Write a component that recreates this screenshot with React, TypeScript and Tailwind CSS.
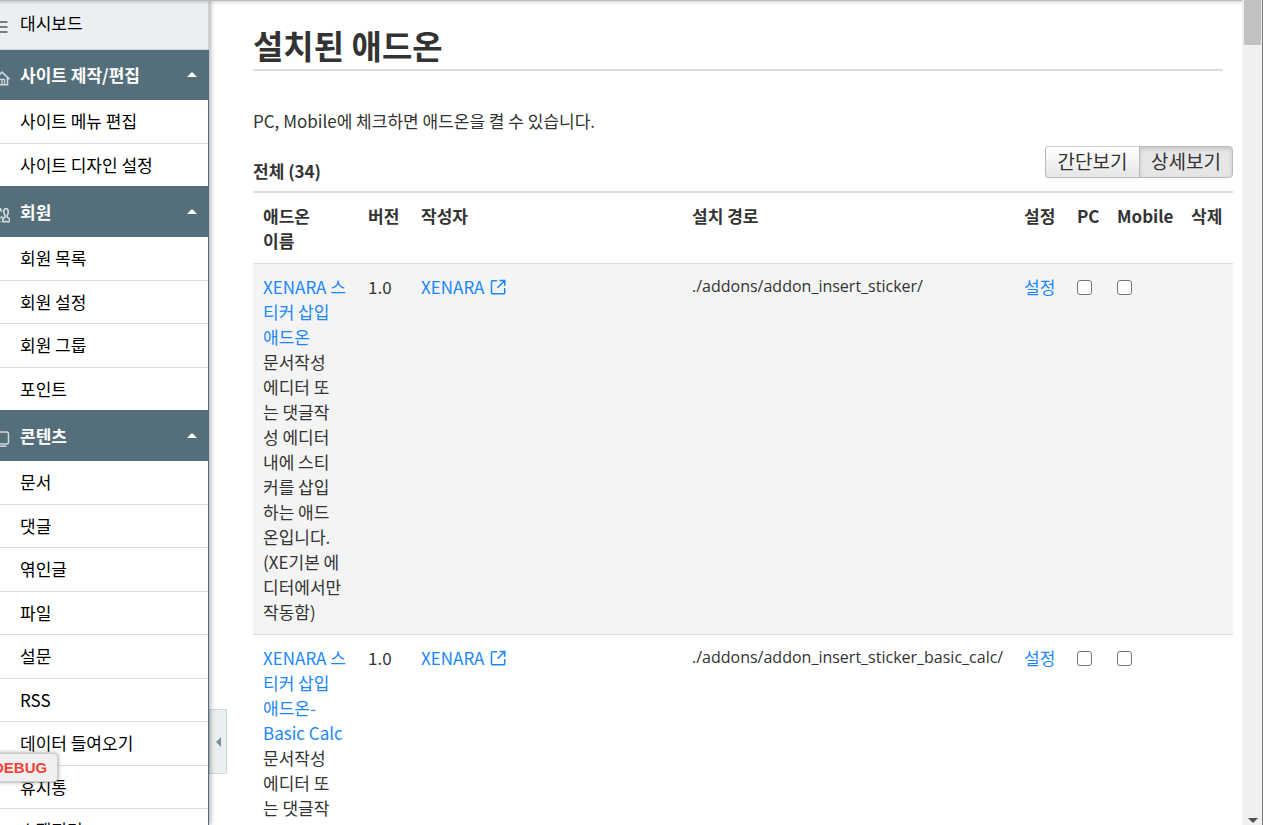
import React, { type ReactNode } from 'react';

const NAV: { title: string; icon: ReactNode; items: string[] }[] = [
  {
    title: '사이트 제작/편집',
    icon: (
      <svg width="16" height="16" viewBox="0 0 16 16" fill="none" stroke="currentColor" strokeWidth="1.6" aria-hidden="true">
        <path d="M.5 9.200 8 2.200l7.500 7M2.500 8v6.700h11V8" />
        <path d="M5.500 14.500V9.300h5v5.200M8 9.500v5" strokeWidth="1.300" />
      </svg>
    ),
    items: ['사이트 메뉴 편집', '사이트 디자인 설정'],
  },
  {
    title: '회원',
    icon: (
      <svg width="16" height="16" viewBox="0 0 16 16" fill="none" stroke="currentColor" strokeWidth="1.700" aria-hidden="true">
        <path d="M8.500 9.500 6.500 11M9.800 3.200C10.300 2.200 11 1.600 12 1.600c1.500 0 2.200 1.400 2.200 3.200 0 1.500-.4 2.700-1 3.500v1.900l2.500 2v2.500H8.800v-2.500l2.200-2V8.300c-.7-.8-1.200-2-1.200-3.500z" />
        <path d="M7.300 4.800C7.300 3 6.500 1.600 5 1.600S2.600 3 2.600 4.800c0 1.500.5 2.700 1.200 3.500v1.900l-3 2v2.500h5.700" />
      </svg>
    ),
    items: ['회원 목록', '회원 설정', '회원 그룹', '포인트'],
  },
  {
    title: '콘텐츠',
    icon: (
      <svg width="16" height="16" viewBox="0 0 16 16" fill="none" stroke="currentColor" strokeWidth="1.500" aria-hidden="true">
        <rect x=".8" y="1" width="13.700" height="12" rx="2" />
        <path d="M3 15.200h9.500" />
      </svg>
    ),
    items: ['문서', '댓글', '엮인글', '파일', '설문', 'RSS', '데이터 들여오기', '휴지통', '스팸필터'],
  },
];

const ADDONS = [
  {
    name: 'XENARA 스티커 삽입 애드온',
    description: '문서작성 에디터 또는 댓글작성 에디터 내에 스티커를 삽입하는 애드온입니다. (XE기본 에디터에서만 작동함)',
    path: './addons/addon_insert_sticker/',
  },
  {
    name: 'XENARA 스티커 삽입 애드온-Basic Calc',
    description: '문서작성 에디터 또는 댓글작성 에디터 내에 스티커를 삽입하는 애드온입니다. (XE기본 에디터에서만 작동함)',
    path: './addons/addon_insert_sticker_basic_calc/',
  },
];

function Sidebar() {
  return (
    <nav className="relative z-10 w-[209px] shrink-0 border-r border-[#546e7a] bg-white text-black shadow-[1px_0_5px_rgba(0,0,0,0.4)]">
      <div className="relative -mr-px flex h-[50px] items-center border-r border-b border-[#cfd8dc] bg-[#eceff1] pb-1">
        <svg className="-ml-2.5 mt-2 mr-2.5 shrink-0 text-[#555]" width="20" height="14" viewBox="0 0 20 14" stroke="currentColor" strokeWidth="1.500" aria-hidden="true">
          <path d="M2 2h15.500M2 7h15.500M2 12h15.500" />
        </svg>
        <a href="#dashboard">대시보드</a>
      </div>
      {NAV.map((section) => (
        <section key={section.title} className="first-of-type:-mt-px">
          <button type="button" className="flex h-[51px] w-full items-center bg-[#546e7a] pr-[11px] text-left font-bold text-white">
            <span className="-ml-1.5 mt-1.5 mr-2.5 shrink-0 text-[#cfd8dc]">{section.icon}</span>
            <span className="grow">{section.title}</span>
            <svg width="10" height="5" viewBox="0 0 10 5" fill="currentColor" aria-hidden="true">
              <path d="M0 5 5 0l5 5z" />
            </svg>
          </button>
          <ul>
            {section.items.map((item) => (
              <li key={item} className="h-11 border-b border-[#ddd] even:h-[43px] last:h-[42px]! last:border-b-0">
                <a href="#menu" className="block pt-2 pl-5">{item}</a>
              </li>
            ))}
          </ul>
        </section>
      ))}
    </nav>
  );
}

function ExternalIcon() {
  return (
    <svg className="ml-1.5 inline-block align-[-1px]" width="16" height="16" viewBox="0 0 16 16" fill="none" stroke="currentColor" strokeWidth="1.500" aria-hidden="true">
      <path d="M7 1.700H2.500a1 1 0 0 0-1 1v11a1 1 0 0 0 1 1h11.200a1 1 0 0 0 1-1V9M9.500 1.500h5.300v5.300M14.500 1.800 7.500 8.800" />
    </svg>
  );
}

const CHECK = 'mt-[6px] block size-[15px] appearance-none rounded-[3px] border border-[#767676] bg-white';

export default function App() {
  return (
    <div className="relative flex h-screen overflow-hidden bg-white font-['Noto_Sans_CJK_KR',sans-serif] text-[17px] leading-[25px] text-[#333]">
      <Sidebar />
      <button type="button" aria-label="메뉴 접기" className="absolute top-[709px] left-[209px] flex h-[65px] w-[18px] items-center justify-center border border-[#cfd8dc] bg-[#eceff1]">
        <svg width="5" height="10" viewBox="0 0 5 10" fill="#78909c" aria-hidden="true">
          <path d="M5 0v10L0 5z" />
        </svg>
      </button>

      <main className="min-w-0 grow pr-[9px] pl-11">
        <h1 className="mr-2.5 border-b-2 border-[#ddd] pt-[26px] pb-[5px] text-[33px] leading-[38px] font-bold">설치된 애드온</h1>
        <p className="mt-[37px]">PC, Mobile에 체크하면 애드온을 켤 수 있습니다.</p>

        <table className="mt-[13px] w-full table-fixed border-collapse text-left">
          <caption className="pb-[13px]">
            <div className="flex items-end justify-between text-left">
              <strong className="-mb-[5px]">전체 (34)</strong>
              <div className="flex h-8 text-[19px] leading-[28px]">
                <button type="button" className="w-[95px] rounded-l border border-[#bbb] border-t-[#ccc] bg-linear-to-b from-white to-[#e6e6e6] pb-1 shadow-[0_1px_2px_rgba(0,0,0,0.05)]">간단보기</button>
                <button type="button" aria-pressed="true" className="-ml-px w-[94px] rounded-r border border-[#bbb] bg-[#e6e6e6] pb-1 shadow-[inset_0_2px_4px_rgba(0,0,0,0.15)]">상세보기</button>
              </div>
            </div>
          </caption>
          <thead>
            <tr className="border-t-2 border-[#ddd] align-top *:px-2.5 *:pt-2.5 *:pb-[10px]">
              <th className="w-[105px]"><span className="block w-14">애드온 이름</span></th>
              <th className="w-[53px] whitespace-nowrap">버전</th>
              <th className="w-[271px]">작성자</th>
              <th>설치 경로</th>
              <th className="w-[53px] whitespace-nowrap">설정</th>
              <th className="w-10">PC</th>
              <th className="w-[74px]">Mobile</th>
              <th className="w-[52px] whitespace-nowrap">삭제</th>
            </tr>
          </thead>
          <tbody>
            {ADDONS.map((addon) => (
              <tr key={addon.path} className="border-t border-[#ddd] align-top odd:bg-[#f4f4f4] *:px-2.5 *:pt-2.5 *:pb-[10px]">
                <td>
                  <a href="#addon" className="block text-[#1b87fb]">{addon.name}</a>
                  <p className="w-20">{addon.description}</p>
                </td>
                <td>1.0</td>
                <td>
                  <a href="#author" className="text-[#1b87fb]">XENARA<ExternalIcon /></a>
                </td>
                <td className="font-['Open_Sans',sans-serif] text-base leading-[25px]">{addon.path}</td>
                <td className="whitespace-nowrap"><a href="#setup" className="text-[#1b87fb]">설정</a></td>
                <td><input type="checkbox" aria-label="PC" className={CHECK} /></td>
                <td><input type="checkbox" aria-label="Mobile" className={CHECK} /></td>
                <td />
              </tr>
            ))}
          </tbody>
        </table>
      </main>

      <div className="flex w-[21px] shrink-0 flex-col items-start justify-between border-r border-[#777] bg-[#f0f0f0] pb-0.5 pl-0.5" aria-hidden="true">
        <div className="h-[45px] w-[17px] bg-[#c1c1c1]" />
        <svg className="ml-1" width="10" height="5" viewBox="0 0 10 5" fill="#505050">
          <path d="M0 0h10L5 5z" />
        </svg>
      </div>

      <div className="absolute top-0 right-[21px] left-0 z-20 h-px bg-[#bbb] shadow-[0_1px_3px_rgba(0,0,0,0.4)]" />
      <button type="button" className="absolute top-[753px] -left-2 z-20 h-[29px] rounded-r border border-[#ccc] bg-[#f0f0f0] pr-2.5 font-['Liberation_Sans',sans-serif] text-[15px] font-bold text-[#f44336] shadow-[0_0_4px_rgba(0,0,0,0.4)]">DEBUG</button>
    </div>
  );
}
